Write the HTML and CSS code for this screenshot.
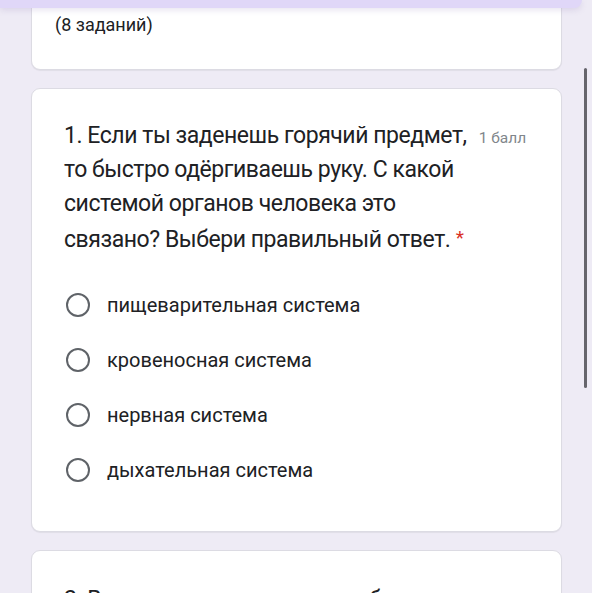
FILE: index.html
```html
<!DOCTYPE html>
<html lang="ru">
<head>
<meta charset="utf-8">
<link rel="stylesheet" href="styles.css">
</head>
<body>
<div class="topbar"></div>
<main class="form">
  <section class="card card-head">
    <p class="count">(8 заданий)</p>
  </section>
  <section class="card card-q">
    <div class="q-head">
      <h2 class="q-title">1. Если ты заденешь горячий предмет,<br>то быстро одёргиваешь руку. С какой<br>системой органов человека это<br>связано? Выбери правильный ответ. <span class="req">*</span></h2>
      <span class="points">1 балл</span>
    </div>
    <ul class="options">
      <li class="option"><span class="radio"></span><span class="opt-text">пищеварительная система</span></li>
      <li class="option"><span class="radio"></span><span class="opt-text">кровеносная система</span></li>
      <li class="option"><span class="radio"></span><span class="opt-text">нервная система</span></li>
      <li class="option"><span class="radio"></span><span class="opt-text">дыхательная система</span></li>
    </ul>
  </section>
  <section class="card card-next">
    <h2 class="q-title">2. В каком органе человека образуется желчь?</h2>
  </section>
</main>
<div class="scrollbar"></div>
</body>
</html>
```

FILE: styles.css
```css
html, body {
  margin: 0;
  padding: 0;
  height: 100%;
  overflow: hidden;
}
body {
  background: #eeebf5;
  font-family: Roboto, "Liberation Sans", Arial, sans-serif;
  color: #202124;
  position: relative;
}
.topbar {
  position: absolute;
  left: 0;
  top: 0;
  width: 582px;
  height: 8px;
  background: #e0d7f8;
  border-radius: 0 0 10px 0;
  box-shadow: 0 2px 6px rgba(120, 100, 170, 0.18);
  z-index: 2;
}
.form {
  width: 531px;
  margin-left: 31px;
  display: flex;
  flex-direction: column;
}
.card {
  background: #ffffff;
  border: 1px solid #dcdbe3;
  border-radius: 9px;
  box-sizing: border-box;
  box-shadow: 0 1px 1px rgba(0, 0, 0, 0.06);
}
.card-head {
  margin-top: -30px;
  height: 100px;
  padding: 43px 24px 0 23px;
}
.count {
  margin: 0;
  font-size: 18px;
  line-height: 22px;
  color: #202124;
}
.card-q {
  margin-top: 18px;
  height: 444px;
  padding: 30px 20px 0 32px;
}
.q-head {
  display: flex;
  align-items: flex-start;
  gap: 12px;
}
.q-title {
  margin: 0;
  font-weight: 400;
  font-size: 23px;
  letter-spacing: -0.45px;
  line-height: 34px;
  color: #202124;
}
.req {
  color: #d93025;
  font-size: 19px;
  vertical-align: 3px;
}
.points {
  font-size: 15.5px;
  line-height: 20px;
  color: #80868b;
  margin-top: 9px;
  white-space: nowrap;
}
.options {
  list-style: none;
  margin: 35px 0 0 2px;
  padding: 0;
  display: flex;
  flex-direction: column;
  gap: 29px;
}
.option {
  display: flex;
  align-items: center;
  height: 26px;
}
.radio {
  width: 20px;
  height: 20px;
  border: 2.5px solid #5f6368;
  border-radius: 50%;
  flex: none;
}
.opt-text {
  margin-left: 17px;
  font-size: 20px;
  color: #202124;
}
.card-next {
  margin-top: 18px;
  height: 200px;
  padding: 32px 24px 0 32px;
}
.scrollbar {
  position: absolute;
  left: 584px;
  top: 68px;
  width: 3px;
  height: 320px;
  background: #66656c;
  border-radius: 2px;
}
```
